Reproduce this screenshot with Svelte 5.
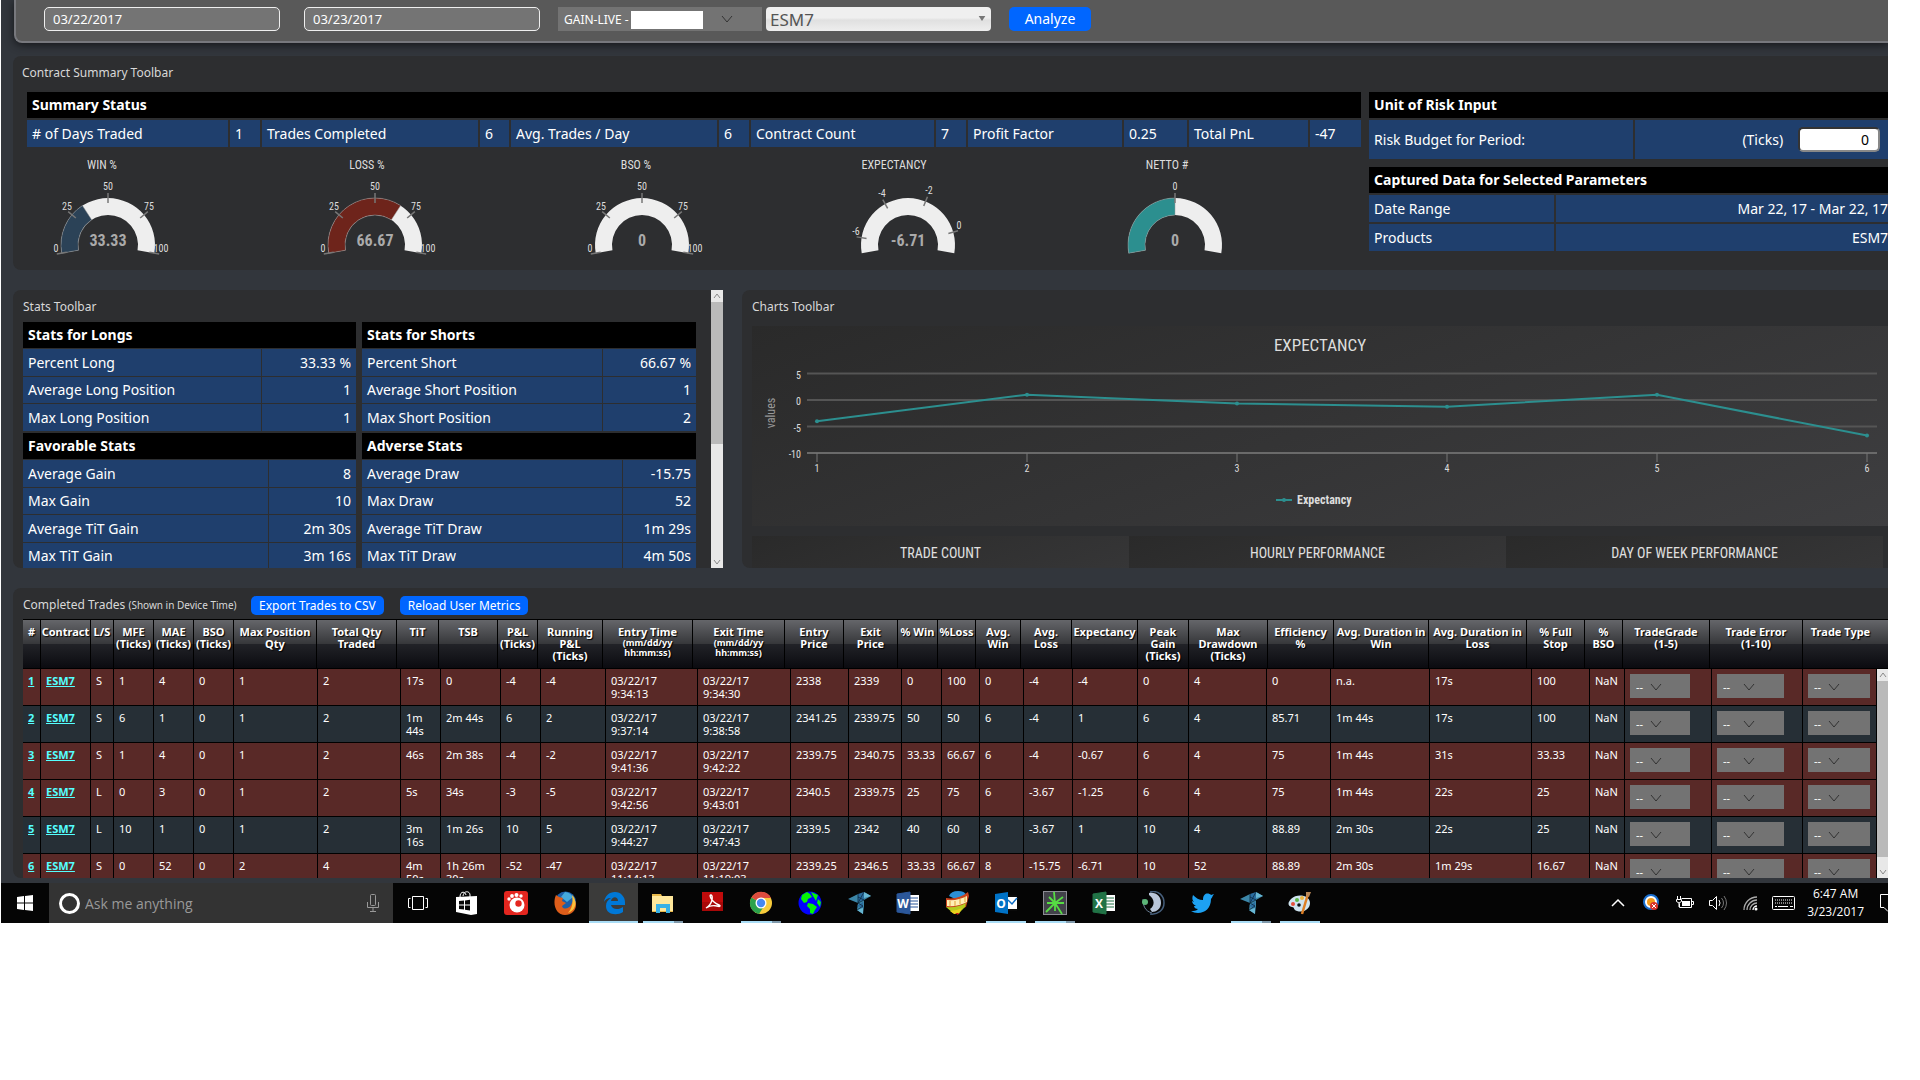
<script>
  let dateFrom = $state('03/22/2017');
  let dateTo = $state('03/23/2017');
  let riskBudget = $state('0');

  const summary = [
    ['# of Days Traded', '1', 203, 32],
    ['Trades Completed', '6', 218, 31],
    ['Avg. Trades / Day', '6', 208, 32],
    ['Contract Count', '7', 185, 32],
    ['Profit Factor', '0.25', 156, 65],
    ['Total PnL', '-47', 121, 51]
  ];

  const percentMarks = [
    { a: -100, t: '0', x: 29, y: 102 },
    { a: -50, t: '25', x: 40, y: 60 },
    { a: 0, t: '50', x: 81, y: 40 },
    { a: 50, t: '75', x: 122, y: 60 },
    { a: 100, t: '100', x: 134, y: 102 }
  ];

  const gauges = [
    { title: 'WIN %', tx: 75, value: '33.33', to: -33, colour: '#2b4257', marks: percentMarks },
    { title: 'LOSS %', tx: 73, value: '66.67', to: 33, colour: '#6e241b', marks: percentMarks },
    { title: 'BSO %', tx: 75, value: '0', to: -100, colour: '#2b4257', marks: percentMarks },
    { title: 'EXPECTANCY', tx: 67, value: '-6.71', to: -100, colour: '#2b4257', marks: [
      { a: -81, t: '-6', x: 29, y: 85 },
      { a: -29, t: '-4', x: 55, y: 47 },
      { a: 22, t: '-2', x: 102, y: 44 },
      { a: 74, t: '0', x: 132, y: 79 }
    ] },
    { title: 'NETTO #', tx: 73, value: '0', to: 0, colour: '#2c8f8f', marks: [{ a: 0, t: '0', x: 81, y: 40 }] }
  ];

  function polar(r, deg) {
    const rad = (deg * Math.PI) / 180;
    return [(81 + r * Math.sin(rad)).toFixed(2), (95 - r * Math.cos(rad)).toFixed(2)];
  }

  function arc(from, to) {
    const big = to - from > 180 ? 1 : 0;
    return `M${polar(47, from)} A47 47 0 ${big} 1 ${polar(47, to)} L${polar(30, to)} A30 30 0 ${big} 0 ${polar(30, from)} Z`;
  }

  function tick(a) {
    return `M${polar(42, a)} L${polar(52, a)}`;
  }

  const stats = [
    { title: 'Stats for Longs', w: [239, 95], rows: [['Percent Long', '33.33 %'], ['Average Long Position', '1'], ['Max Long Position', '1']] },
    { title: 'Stats for Shorts', w: [241, 94], rows: [['Percent Short', '66.67 %'], ['Average Short Position', '1'], ['Max Short Position', '2']] },
    { title: 'Favorable Stats', w: [246, 88], rows: [['Average Gain', '8'], ['Max Gain', '10'], ['Average TiT Gain', '2m 30s'], ['Max TiT Gain', '3m 16s']] },
    { title: 'Adverse Stats', w: [261, 74], rows: [['Average Draw', '-15.75'], ['Max Draw', '52'], ['Average TiT Draw', '1m 29s'], ['Max TiT Draw', '4m 50s']] }
  ];

  const expectancy = [-4, 1, -0.67, -1.25, 1, -6.71];
  const px = (i) => 65 + i * 210;
  const py = (v) => 74 - v * 5.3;
  const line = expectancy.map((v, i) => `${px(i)},${py(v)}`).join(' ');

  // label, header width, body width
  const columns = [
    ['#', 18, 18],
    ['Contract', 50, 50],
    ['L/S', 23, 23],
    ['MFE|(Ticks)', 40, 40],
    ['MAE|(Ticks)', 40, 40],
    ['BSO|(Ticks)', 40, 40],
    ['Max Position|Qty', 83, 84],
    ['Total Qty|Traded', 80, 83],
    ['TiT', 42, 40],
    ['TSB', 59, 60],
    ['P&L|(Ticks)', 40, 40],
    ['Running|P&L|(Ticks)', 65, 65],
    ['Entry Time|*(mm/dd/yy|*hh:mm:ss)', 90, 92],
    ['Exit Time|*(mm/dd/yy|*hh:mm:ss)', 92, 93],
    ['Entry|Price', 59, 58],
    ['Exit|Price', 54, 53],
    ['% Win', 40, 40],
    ['%Loss', 38, 38],
    ['Avg.|Win', 45, 44],
    ['Avg.|Loss', 51, 49],
    ['Expectancy', 66, 65],
    ['Peak|Gain|(Ticks)', 51, 51],
    ['Max|Drawdown|(Ticks)', 79, 78],
    ['Efficiency|%', 66, 64],
    ['Avg. Duration in|Win', 95, 99],
    ['Avg. Duration in|Loss', 98, 102],
    ['% Full|Stop', 58, 58],
    ['%|BSO', 38, 35],
    ['TradeGrade|(1-5)', 87, 87],
    ['Trade Error|(1-10)', 93, 91],
    ['Trade Type', 86, 74]
  ];

  const trades = [
    ['S', '1', '4', '0', '1', '2', '17s', '0', '-4', '-4', '03/22/17 9:34:13', '03/22/17 9:34:30', '2338', '2339', '0', '100', '0', '-4', '-4', '0', '4', '0', 'n.a.', '17s', '100', 'NaN'],
    ['S', '6', '1', '0', '1', '2', '1m 44s', '2m 44s', '6', '2', '03/22/17 9:37:14', '03/22/17 9:38:58', '2341.25', '2339.75', '50', '50', '6', '-4', '1', '6', '4', '85.71', '1m 44s', '17s', '100', 'NaN'],
    ['S', '1', '4', '0', '1', '2', '46s', '2m 38s', '-4', '-2', '03/22/17 9:41:36', '03/22/17 9:42:22', '2339.75', '2340.75', '33.33', '66.67', '6', '-4', '-0.67', '6', '4', '75', '1m 44s', '31s', '33.33', 'NaN'],
    ['L', '0', '3', '0', '1', '2', '5s', '34s', '-3', '-5', '03/22/17 9:42:56', '03/22/17 9:43:01', '2340.5', '2339.75', '25', '75', '6', '-3.67', '-1.25', '6', '4', '75', '1m 44s', '22s', '25', 'NaN'],
    ['L', '10', '1', '0', '1', '2', '3m 16s', '1m 26s', '10', '5', '03/22/17 9:44:27', '03/22/17 9:47:43', '2339.5', '2342', '40', '60', '8', '-3.67', '1', '10', '4', '88.89', '2m 30s', '22s', '25', 'NaN'],
    ['S', '0', '52', '0', '2', '4', '4m 50s', '1h 26m 30s', '-52', '-47', '03/22/17 11:14:13', '03/22/17 11:19:03', '2339.25', '2346.5', '33.33', '66.67', '8', '-15.75', '-6.71', '10', '52', '88.89', '2m 30s', '1m 29s', '16.67', 'NaN']
  ];

  const picks = ['grade', 'error', 'type'];

  const apps = [
    ['taskview'], ['store'], ['gom'], ['firefox'], ['edge', 'active'], ['explorer', 'open multi'],
    ['acrobat'], ['chrome', 'open multi'], ['globe'], ['bird'], ['word'], ['balloon'],
    ['outlook', 'open'], ['trader', 'open multi'], ['excel'], ['teamspeak'], ['twitter'],
    ['bird', 'open multi'], ['paint', 'open']
  ];
</script>

{#snippet chevron()}
  <svg class="chevron" viewBox="0 0 12 8" aria-hidden="true"><path d="M1 1l5 6 5-6" /></svg>
{/snippet}

{#snippet scrollbar(size)}
  <div class="scrollbar {size}" aria-hidden="true">
    <svg viewBox="0 0 12 12"><path d="M3 8l3-4 3 4" /></svg>
    <span class="thumb"></span>
    <svg class="down" viewBox="0 0 12 12"><path d="M3 4l3 4 3-4" /></svg>
  </div>
{/snippet}

{#snippet icon(name)}
  <svg class="icon" viewBox="0 0 24 24" aria-hidden="true">
    {#if name === 'taskview'}
      <path d="M6.500 5.500h11v13h-11zM4.500 7.500h-2v9h2M19.500 7.500h2v9h-2" fill="none" stroke="#fff" />
    {:else if name === 'store'}
      <path d="M5 6c0-6 5-6 6-2m-3 1c1-6 7-5 7-1v2" fill="none" stroke="#fff" />
      <path d="M1 6l21-1v18l-6 1-15-3z" fill="#fff" />
      <path d="M4 10l5-.5v4H4zM10 9.400l5-.6v4.700h-5zM4 14.500h5v4l-5-.6zM10 14.500h5v5l-5-.7z" fill="#050505" />
    {:else if name === 'gom'}
      <rect width="24" height="24" rx="3" fill="#e4261f" />
      <circle cx="13" cy="14" r="7.500" fill="#fff" />
      <circle cx="14.500" cy="12.500" r="3.200" fill="#e4261f" />
      <circle cx="5" cy="8" r="1.700" fill="#fff" /><circle cx="8" cy="5" r="1.900" fill="#fff" />
      <circle cx="12.500" cy="4" r="2" fill="#fff" /><circle cx="17" cy="5" r="1.700" fill="#fff" />
    {:else if name === 'firefox'}
      <circle cx="12.500" cy="11" r="10.500" fill="#1d5fa8" />
      <path d="M12 1a10 10 0 0 1 8 5l-6 5-6-5z" fill="#45a9dc" />
      <path d="M3 4l3 2 4 1-1 3 4 2-4 3c1 4 7 3 9-1l3-6c5 7 0 16-9 16S-1 13 3 4z" fill="#dd5d1a" />
      <path d="M19 4c6 6 4 15-4 18 5-6 5-11 4-18z" fill="#fbc23c" />
    {:else if name === 'edge'}
      <path d="M2 11C3 5 7 1 13 1c6 0 10 5 10 10v3H9c1 5 8 5 12 2v5C15 25 4 24 4 15c0-4 2-6 5-8-4 0-6 2-7 4zm7-1h7c0-5-6-5-7 0z" fill="#0078d7" />
    {:else if name === 'explorer'}
      <path d="M1 3h9l1 2h11v16H1z" fill="#e8b84a" />
      <path d="M1 5h21v15H1z" fill="#ffe79b" />
      <path d="M5 13h14v9h-4v-5h-6v5H5z" fill="#39b1e6" />
    {:else if name === 'acrobat'}
      <rect x="2" y="1" width="21" height="19" fill="#c00b0b" />
      <path d="M2 11h21v9H2z" fill="#8f0505" opacity=".5" />
      <path d="M6 17c7-4 7-12 5-13s-1 6 8 10c2 1 1 2-2 1s-8 0-11 2z" fill="none" stroke="#fff" stroke-width="1.400" />
    {:else if name === 'chrome'}
      <circle cx="12" cy="12" r="11" fill="#f7cb3b" />
      <path d="M12 12L2.500 6.500A11 11 0 0 0 10 23l5-8z" fill="#2ba24c" />
      <path d="M12 12L2.500 6.500a11 11 0 0 1 19.500.5H12z" fill="#dc4b3e" />
      <circle cx="12" cy="12" r="5.500" fill="#fff" /><circle cx="12" cy="12" r="4.200" fill="#4688f1" />
    {:else if name === 'globe'}
      <circle cx="12" cy="12" r="11.500" fill="#0202ff" />
      <path d="M4 4l5-3 3 2 2 3-4 2-1 3-3 1-3-4zM13 1l7 3-2 6-3-5zM10 12l5 1 4 3-2 3-2 4-3-1v-4l-3-3zM20 8l3 3-1 5-3-4z" fill="#05f505" />
    {:else if name === 'bird'}
      <path d="M1 8l10-5v3l6-5 7 4-7 4v6l-1 8-6-4 1-7z" fill="#3c86a8" />
      <path d="M11 3v8l6-2V1zM10 15l6-4v6z" fill="#2a6ca0" /><path d="M17 1l7 4-7 2zM10 19l6-2v6z" fill="#68b7d3" />
      <path d="M11 6l6 3-6 3 5 3-6 4M11 3v9l6-11" fill="none" stroke="#0b2a40" stroke-width=".8" />
    {:else if name === 'word' || name === 'excel' || name === 'outlook'}
      <path d="M12 4h11v16H12z" fill="#fff" />
      {#if name === 'outlook'}
        <path d="M12 4h11v2H12zM12 18h11v2H12z" fill="#0a0a0a" />
        <path d="M14 9l4 4 5-6" fill="none" stroke="#0f6fc6" stroke-width="1.500" />
      {:else}
        <path d="M14 7h8M14 10h8M14 13h8M14 16h8" class={name} fill="none" />
      {/if}
      <path d="M1 3l13-2v22L1 21z" class="{name} plate" />
      <text x="7" y="17" text-anchor="middle" class="letter">{name === 'word' ? 'W' : name === 'excel' ? 'X' : 'O'}</text>
    {:else if name === 'balloon'}
      <path d="M4 5q2-5 9-5t8 4l-9 5z" fill="#2b8fd6" />
      <path d="M1 7q12 2 22-6l1 4-3 11Q12 20 1 16z" fill="#c9421c" />
      <path d="M2 9q11 1 20-4v6q-9 5-20 4z" fill="#fff0b4" />
      <path d="M5 10v5M10 10v5M15 8v5M20 6v5" stroke="#e3a033" />
      <path d="M1 16q12 1 20-4l-1 4-5 5-7 1z" fill="#b4cc1e" /><path d="M5 20q6 0 12-3l-3 6H9z" fill="#e8d21c" /><path d="M10 22h4l-1 2z" fill="#c01818" />
    {:else if name === 'trader'}
      <rect x=".5" y=".5" width="23" height="23" fill="#42424a" stroke="#8c8c94" />
      <path d="M12 12L11 1M12 12l8-6M12 12h9M12 12l7 11M12 12v8M12 12l-9 9M12 12H4M12 12L6 6" stroke="#56dd43" stroke-width="1.800" />
    {:else if name === 'teamspeak'}
      <path d="M9 1c9-2 14 4 14 11s-6 12-14 11" fill="none" stroke="#465f7c" stroke-width="1.500" />
      <path d="M8 2c8-1 12 4 12 10s-5 9-9 9l-2-3c5-3 5-10-1-14z" fill="#b9c6d9" />
      <path d="M2 8c0 7 2 12 9 14" fill="none" stroke="#6b7f96" />
      <circle cx="4" cy="11" r="3" fill="#5cb577" />
    {:else if name === 'twitter'}
      <path d="M23 5l-2 3c0 9-6 14-13 14-3 0-5-1-7-2 3 0 5 0 7-2-2 0-4-1-4-3h2c-2-1-4-3-4-5l2 1c-2-2-2-4-1-7 3 3 6 5 10 5 0-8 6-7 8-5l3-1-2 3z" fill="#1da1f2" />
    {:else if name === 'paint'}
      <path d="M3 8c6-6 19-4 19 4 0 6-6 10-13 8-4-1-2-4-5-4-5-1-4-5-1-8z" fill="#cfe4ef" />
      <circle cx="5" cy="13" r="2" fill="#e5503c" /><circle cx="9" cy="9" r="2" fill="#5cb646" />
      <circle cx="14" cy="7" r="2" fill="#edb53c" /><circle cx="11" cy="14" r="1.800" fill="#101418" />
      <path d="M20 3l-6 20" stroke="#dd7f26" stroke-width="2.500" /><path d="M18 1h5l-2 5-3-1z" fill="#b88656" />
    {/if}
  </svg>
{/snippet}

<div class="screen">
  <div class="page">
    <form class="filters">
      <input class="date" type="text" aria-label="Start date" bind:value={dateFrom} />
      <input class="date" type="text" aria-label="End date" bind:value={dateTo} />
      <div class="selects">
        <div class="account">
          <select aria-label="Account"><option>GAIN-LIVE -</option></select>
          <span class="mask"></span>
          {@render chevron()}
        </div>
        <div class="product">
          <select aria-label="Product"><option>ESM7</option></select>
          <svg viewBox="0 0 8 6" aria-hidden="true"><path d="M0 0h8L4 6z" fill="#777" /></svg>
        </div>
      </div>
      <button class="blue analyze" type="button">Analyze</button>
    </form>

    <section class="panel summary">
      <h2>Contract Summary Toolbar</h2>
      <div class="summaryGrid">
        <div>
          <table class="data">
            <colgroup>
              {#each summary as s}<col style="width: {s[2]}px" /><col style="width: {s[3]}px" />{/each}
            </colgroup>
            <thead><tr><th colspan="12">Summary Status</th></tr></thead>
            <tbody>
              <tr>{#each summary as s}<td>{s[0]}</td><td>{s[1]}</td>{/each}</tr>
            </tbody>
          </table>
          <div class="gauges">
            {#each gauges as g}
              <svg viewBox="0 0 180 112" role="img" aria-label={g.title}>
                <text class="title" x={g.tx} y="19">{g.title}</text>
                <path d={arc(-100, 100)} fill="#eee" />
                {#if g.to > -100}<path d={arc(-100, g.to)} fill={g.colour} stroke="#999" stroke-width=".5" />{/if}
                {#each g.marks as m}
                  <path d={tick(m.a)} stroke="#777" stroke-width="1.500" />
                  <text x={m.x} y={m.y}>{m.t}</text>
                {/each}
                <text class="value" x="81" y="96">{g.value}</text>
              </svg>
            {/each}
          </div>
        </div>
        <div class="side">
          <table class="data risk">
            <colgroup><col style="width: 266px" /><col style="width: 253px" /></colgroup>
            <thead><tr><th colspan="2">Unit of Risk Input</th></tr></thead>
            <tbody>
              <tr>
                <td>Risk Budget for Period:</td>
                <td><label>(Ticks) <input type="text" bind:value={riskBudget} /></label></td>
              </tr>
            </tbody>
          </table>
          <table class="data captured">
            <colgroup><col style="width: 187px" /><col style="width: 332px" /></colgroup>
            <thead><tr><th colspan="2">Captured Data for Selected Parameters</th></tr></thead>
            <tbody>
              <tr><td>Date Range</td><td>Mar 22, 17 - Mar 22, 17</td></tr>
              <tr><td>Products</td><td>ESM7</td></tr>
            </tbody>
          </table>
        </div>
      </div>
    </section>

    <div class="middle">
      <section class="panel stats">
        <div class="statsBody">
          <h2>Stats Toolbar</h2>
          <div class="statsGrid">
            {#each stats as s}
              <table class="data">
                <colgroup>{#each s.w as w}<col style="width: {w}px" />{/each}</colgroup>
                <thead><tr><th colspan="2">{s.title}</th></tr></thead>
                <tbody>
                  {#each s.rows as r}<tr><td>{r[0]}</td><td>{r[1]}</td></tr>{/each}
                </tbody>
              </table>
            {/each}
          </div>
        </div>
        {@render scrollbar('mid')}
      </section>

      <section class="panel charts">
        <h2>Charts Toolbar</h2>
        <svg class="chart" viewBox="0 0 1136 200" role="img" aria-label="Expectancy chart">
          <text class="chartTitle" x="568" y="25">EXPECTANCY</text>
          {#each [5, 0, -5, -10] as v}
            <path d="M55 {py(v)}H1125" stroke={v === -10 ? '#6a6a6a' : '#555'} stroke-width="2" />
            <text class="yLabel" x="49" y={py(v) + 5}>{v}</text>
          {/each}
          {#each expectancy as v, i}
            <path d="M{px(i)} 127v9" stroke="#777" />
            <text x={px(i)} y="146">{i + 1}</text>
            <circle cx={px(i)} cy={py(v)} r="2" fill="#2c8f8f" />
          {/each}
          <polyline points={line} fill="none" stroke="#2c8f8f" stroke-width="2" />
          <text class="axis" transform="translate(23 87) rotate(-90)">values</text>
          <path d="M524 174h16" stroke="#2c8f8f" stroke-width="2" />
          <circle cx="532" cy="174" r="2" fill="#2c8f8f" />
          <text class="legend" x="545" y="178">Expectancy</text>
        </svg>
        <div class="tabs">
          <button type="button">TRADE COUNT</button>
          <button type="button">HOURLY PERFORMANCE</button>
          <button type="button">DAY OF WEEK PERFORMANCE</button>
        </div>
      </section>
    </div>

    <section class="panel trades">
      <div class="tradesBar">
        <h2>Completed Trades <small>(Shown in Device Time)</small></h2>
        <button class="blue" type="button">Export Trades to CSV</button>
        <button class="blue" type="button">Reload User Metrics</button>
      </div>
      <table class="head">
        <colgroup>{#each columns as c}<col style="width: {c[1]}px" />{/each}</colgroup>
        <thead>
          <tr>
            {#each columns as c}
              <th>{#each c[0].split('|') as part}<span class:fine={part[0] === '*'}>{part.replace('*', '')}</span>{/each}</th>
            {/each}
          </tr>
        </thead>
      </table>
      <div class="tradesBody">
        <table class="rows">
          <colgroup>{#each columns as c}<col style="width: {c[2]}px" />{/each}</colgroup>
          <tbody>
            {#each trades as t, i}
              <tr class:win={i === 1 || i === 4}>
                <td><a href="#trade{i + 1}">{i + 1}</a></td>
                <td><a href="#esm7">ESM7</a></td>
                {#each t as cell}<td>{cell}</td>{/each}
                {#each picks as p}
                  <td>
                    <div class="pick {p}">
                      <select aria-label="Trade {p} {i + 1}"><option>--</option></select>
                      {@render chevron()}
                    </div>
                  </td>
                {/each}
              </tr>
            {/each}
          </tbody>
        </table>
        {@render scrollbar('low')}
      </div>
    </section>
  </div>

  <footer class="taskbar">
    <button class="start" type="button" aria-label="Start">
      <svg viewBox="0 0 16 16"><path d="M0 2l7-1v6.500H0zM8 1l8-1v7.500H8zM0 8.500h7V15l-7-1zM8 8.500h8V16l-8-1z" fill="#fff" /></svg>
    </button>
    <div class="search">
      <span class="ring"></span>
      <input type="text" placeholder="Ask me anything" aria-label="Ask me anything" />
      <svg viewBox="0 0 12 18" fill="none" stroke="#999"><rect x="3.500" y=".5" width="5" height="11" rx="1" /><path d="M.5 8v5.500h11V8M6 13.500v4M3 17.500h6" /></svg>
    </div>
    {#each apps as a}
      <button class="app {a[1] || ''}" type="button" aria-label={a[0]}>{@render icon(a[0])}</button>
    {/each}
    <div class="tray">
      <svg viewBox="0 0 22 22" fill="none" stroke="#fff" stroke-width="1.500"><path d="M5 14l6-6 6 6" /></svg>
      <svg viewBox="0 0 22 22"><circle cx="11" cy="10" r="7" fill="#fff" stroke="#1a6fd0" stroke-width="2" /><circle cx="11" cy="10" r="4" fill="#f49a1a" /><circle cx="14" cy="14" r="4" fill="#d8332c" /><path d="M12 12l4 4m0-4l-4 4" stroke="#fff" /></svg>
      <svg viewBox="0 0 22 22"><path d="M9 9h8v5H9z" fill="#fff" /><path d="M8.500 6.500h10v9h-12v-4M19 9.500h1.500v3H19M4.500 4v3m3-3v3M3.500 7.500h5v2q-2.500 3-5 0zM6 11v4" fill="none" stroke="#fff" /></svg>
      <svg viewBox="0 0 22 22" fill="none" stroke="#fff"><path d="M3.500 8.500h3l4-4v13l-4-4h-3zM13 8q2 3 0 6" /><path d="M15.500 6q4 5 0 10M18 4q5 7 0 14" stroke="#777" /></svg>
      <svg viewBox="0 0 22 22" fill="none" stroke="#aaa" stroke-width="1.300"><path d="M5 18A13 13 0 0 1 18 5M8 18A10 10 0 0 1 18 8M11 18a7 7 0 0 1 7-7" /><path d="M14 18a4 4 0 0 1 4-4" stroke="#fff" /><circle cx="17" cy="17" r="1.500" fill="#fff" stroke="none" /></svg>
      <svg class="keyboard" viewBox="0 0 24 22" fill="none" stroke="#fff"><rect x=".5" y="4.500" width="22" height="13" rx="1" /><path d="M3 8h18M3 11h18" stroke-dasharray="1 1" /><path d="M3 14.500h2m1 0h10m2 0h3" /></svg>
      <div class="clock"><span>6:47 AM</span><span>3/23/2017</span></div>
      <svg class="notes" viewBox="0 0 8 22" fill="none" stroke="#fff"><path d="M8 2.500H.5v13H4l4 4" /></svg>
    </div>
  </footer>
</div>

<style>
  :global(body) {
    margin: 0;
    background: #fff;
  }

  .screen {
    margin: 0 32px 0 1px;
    overflow: hidden;
    font-family: "Noto Sans", "Open Sans", sans-serif;
    font-size: 14px;
    color: #fff;
  }

  .screen * {
    box-sizing: border-box;
  }

  .page {
    background: #32363c;
    padding: 0 0 5px 12px;
    display: flex;
    flex-direction: column;
    gap: 20px;
  }

  button, input, select {
    font: inherit;
    color: inherit;
    margin: 0;
    border: none;
    background: none;
    border-radius: 0;
  }

  select {
    appearance: none;
    display: block;
    width: 100%;
    height: 100%;
  }

  h2 {
    margin: 0;
    font-size: 12px;
    font-weight: normal;
    line-height: 18px;
    color: #d8d8d8;
  }

  .filters {
    display: flex;
    align-items: center;
    height: 43px;
    margin: 0 0 -7px 1px;
    padding: 0 0 3px 28px;
    background: #595959;
    border: solid #77787d;
    border-width: 0 0 2px 2px;
    border-radius: 0 0 0 8px;
    box-shadow: 0 2px 8px #15171a;
  }

  .date {
    width: 236px;
    height: 24px;
    margin-right: 24px;
    padding: 0 8px;
    font-size: 13px;
    border: 1px solid #eee;
    border-radius: 5px;
    background: #747474;
  }

  .selects {
    display: flex;
    gap: 4px;
    margin-left: -6px;
  }

  .account, .product {
    position: relative;
    width: 204px;
    height: 24px;
    font-size: 12px;
    background: #737373;
  }

  .account select {
    padding: 0 6px;
  }

  .mask {
    position: absolute;
    left: 73px;
    top: 4px;
    width: 72px;
    height: 18px;
    background: #fff;
  }

  .chevron {
    position: absolute;
    width: 12px;
    height: 8px;
    fill: none;
    stroke: #333;
  }

  .account .chevron {
    right: 29px;
    top: 8px;
  }

  .product {
    width: 225px;
    border-radius: 4px;
    background: linear-gradient(#efefef 45%, #e0e0e0 55%, #eee);
    color: #555;
    font-size: 17px;
  }

  .product select {
    padding: 0 4px;
  }

  .product svg {
    position: absolute;
    right: 5px;
    top: 9px;
    width: 8px;
    height: 5px;
  }

  .blue {
    background: #06f;
    border-radius: 5px;
    padding: 0 8px;
    font-size: 12px;
    height: 19px;
    line-height: 18px;
    white-space: nowrap;
  }

  .analyze {
    width: 82px;
    height: 24px;
    margin-left: 18px;
    font-size: 14px;
  }

  .panel {
    background: #2d2e30;
    border-radius: 8px 0 0 8px;
    overflow: hidden;
  }

  table {
    width: 100%;
    table-layout: fixed;
    border-spacing: 0;
  }

  .data th, .data td {
    height: 28px;
    padding: 0 5px;
    line-height: 20px;
    text-align: left;
    white-space: nowrap;
    border: solid #2d2e30;
    border-width: 0 2px 2px 0;
    background: #1f3f6d;
  }

  .data td {
    height: 29px;
  }

  .data th {
    background: #000;
    font-weight: bold;
    border-right-width: 0;
  }

  .data td:last-child {
    border-right-width: 0;
  }

  .summary {
    height: 214px;
    padding: 8px 0 0 9px;
  }

  .summaryGrid {
    display: grid;
    grid-template-columns: 1334fr 519fr;
    gap: 8px;
    margin: 10px 0 0 5px;
  }

  .gauges {
    display: grid;
    grid-template-columns: repeat(5, 1fr);
    margin-top: 1px;
  }

  .gauges svg {
    width: 180px;
    height: 112px;
  }

  svg text {
    font-family: "Liberation Sans Narrow", "Roboto Condensed", "Liberation Sans", sans-serif;
    font-size: 10px;
    fill: #ddd;
    text-anchor: middle;
  }

  .gauges .title {
    font-size: 12px;
  }

  .gauges .value {
    font-size: 16px;
    font-weight: bold;
    fill: #aaa;
  }

  .side {
    min-width: 0;
    display: flex;
    flex-direction: column;
    gap: 6px;
  }

  .risk tbody td {
    height: 41px;
  }

  .side td:last-child {
    text-align: right;
    padding-right: 0;
  }

  .risk td:last-child {
    padding-right: 8px;
  }

  .risk label {
    display: flex;
    align-items: center;
    justify-content: flex-end;
    gap: 15px;
  }

  .risk input {
    width: 82px;
    height: 25px;
    padding: 0 9px;
    border: 2px inset #888;
    border-radius: 5px;
    background: #fff;
    color: #000;
    text-align: right;
  }

  .middle {
    display: grid;
    grid-template-columns: 710fr 1146fr;
    gap: 19px;
    height: 278px;
  }

  .stats {
    display: flex;
  }

  .statsBody {
    flex: 1;
    padding: 8px 14px 0 10px;
  }

  .statsGrid {
    display: grid;
    grid-template-columns: 334fr 335fr;
    gap: 1px 5px;
    margin-top: 6px;
  }

  .stats .data th, .stats .data td {
    height: 27px;
    border-bottom-width: 1px;
    border-right-width: 1px;
  }

  .stats .data tbody tr:nth-child(odd) td {
    height: 28px;
  }

  .stats .data td:last-child {
    text-align: right;
  }

  .scrollbar {
    display: flex;
    flex-direction: column;
    width: 12px;
    background: #e8e8e8;
  }

  .scrollbar svg {
    width: 12px;
    height: 12px;
    fill: none;
    stroke: #888;
  }

  .scrollbar .down {
    margin-top: auto;
  }

  .thumb {
    height: 51%;
    background: #bababa;
  }

  .low .thumb {
    height: 84%;
  }

  .charts {
    padding: 8px 0 0 10px;
  }

  .chart {
    display: block;
    width: 100%;
    margin: 10px 0;
    background: linear-gradient(160deg, #2a2a2a, #3e3e40);
  }

  .chart .chartTitle {
    font-size: 17px;
  }

  .chart .yLabel {
    text-anchor: end;
  }

  .chart .axis {
    font-size: 12px;
    fill: #999;
  }

  .chart .legend {
    font-size: 12px;
    font-weight: bold;
    text-anchor: start;
  }

  .tabs {
    display: grid;
    grid-template-columns: repeat(3, 1fr);
    padding-right: 5px;
  }

  .tabs button {
    height: 34px;
    padding: 0;
    font-family: "Liberation Sans Narrow", "Roboto Condensed", "Liberation Sans", sans-serif;
    font-size: 14px;
    color: #e0e0e0;
    background: linear-gradient(160deg, #2a2a2a, #363637);
  }

  .trades {
    height: 290px;
    padding: 8px 0 0 10px;
  }

  .tradesBar {
    display: flex;
    height: 23px;
  }

  .tradesBar h2 {
    width: 228px;
    line-height: 18px;
    white-space: nowrap;
  }

  .tradesBar small {
    font-size: 10px;
  }

  .tradesBar .blue + .blue {
    margin-left: 16px;
  }

  .head th {
    height: 50px;
    padding: 6px 0 0;
    vertical-align: top;
    font-size: 11px;
    line-height: 12px;
    font-weight: bold;
    white-space: nowrap;
    text-shadow: 1px 1px 1px #000;
    border: solid #000;
    border-width: 1px 1px 1px 0;
    background: linear-gradient(#65666a, #37383b 49%, #212227 51%, #0b0b10);
  }

  .head th:last-child {
    padding-right: 10px;
  }

  .head span {
    display: flex;
    justify-content: center;
  }

  .head .fine {
    font-size: 9px;
    line-height: 10px;
  }

  .tradesBody {
    display: flex;
    height: 209px;
    overflow: hidden;
  }

  .tradesBody table {
    flex: 1;
    height: 222px;
    min-width: 0;
  }

  .rows td {
    height: 37px;
    padding: 5px 4px 0 5px;
    vertical-align: top;
    font-size: 11px;
    line-height: 13px;
    background: #592927;
    border: solid #000;
    border-width: 0 1px 1px 0;
  }

  .rows td:nth-child(n + 29) {
    padding-right: 0;
  }

  .rows .win td {
    background: #262f36;
  }

  .rows a {
    color: #5ff;
    font-weight: bold;
  }

  .pick {
    position: relative;
    width: 60px;
    height: 24px;
    background: #737373;
  }

  .pick select {
    padding: 0 6px;
  }

  .pick .chevron {
    left: 20px;
    top: 9px;
  }

  .error {
    width: 67px;
  }

  .error .chevron {
    left: 26px;
  }

  .type {
    width: 62px;
  }

  .taskbar {
    display: flex;
    height: 40px;
    background: #050505;
    font-family: "Open Sans", "Noto Sans", sans-serif;
  }

  .start {
    width: 48px;
    padding: 4px 0 0;
  }

  .start svg {
    width: 16px;
    height: 16px;
  }

  .search {
    display: flex;
    align-items: center;
    width: 344px;
    padding: 0 14px 0 10px;
    background: #333;
  }

  .ring {
    width: 21px;
    height: 21px;
    border: 3px solid #fff;
    border-radius: 50%;
  }

  .search input {
    flex: 1;
    min-width: 0;
    padding: 0 5px;
    font-size: 14px;
  }

  .search input::placeholder {
    color: #999;
  }

  .search svg {
    width: 12px;
    height: 18px;
  }

  .app {
    display: grid;
    place-items: center;
    width: 49px;
    padding: 0;
  }

  .icon {
    width: 24px;
    height: 24px;
  }

  .active {
    background: linear-gradient(#a9dcf5, #a9dcf5) bottom / 100% 2px no-repeat #3b3b3a;
  }

  .open {
    background: linear-gradient(#a9dcf5, #a9dcf5) bottom / 40px 2px no-repeat;
  }

  .multi {
    background: linear-gradient(90deg, #a9dcf5 31px, #7f99ab 31px) bottom / 40px 2px no-repeat;
  }

  .word {
    stroke: #2b579a;
  }

  .excel {
    stroke: #217346;
  }

  .word.plate {
    fill: #2b579a;
  }

  .excel.plate {
    fill: #217346;
  }

  .outlook.plate {
    fill: #0072c6;
  }

  .icon .letter {
    font-family: "Open Sans", sans-serif;
    font-size: 12px;
    font-weight: bold;
    fill: #fff;
  }

  .tray {
    display: flex;
    align-items: center;
    gap: 11px;
    margin-left: auto;
  }

  .tray svg {
    width: 22px;
    height: 22px;
  }

  .tray .keyboard {
    width: 24px;
  }

  .tray .notes {
    width: 8px;
    margin-left: 5px;
  }

  .clock {
    display: flex;
    flex-direction: column;
    align-items: center;
    font-size: 12px;
    line-height: 18px;
  }
</style>
